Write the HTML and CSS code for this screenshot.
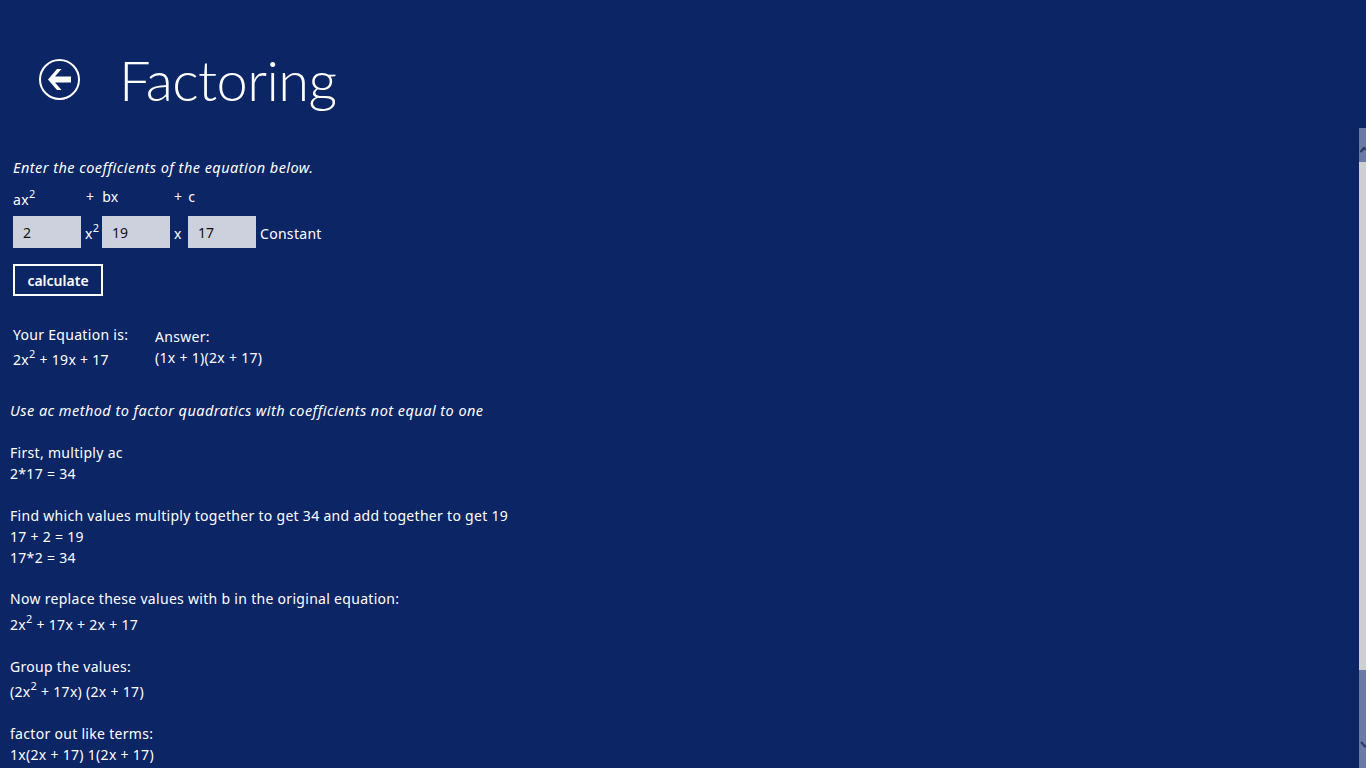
FILE: index.html
```html
<!DOCTYPE html>
<html lang="en">
<head>
<meta charset="utf-8">
<title>Factoring</title>
<link rel="stylesheet" href="styles.css">
</head>
<body>
<div class="page">
  <main class="content">
    <header class="header">
      <svg class="back" width="42" height="42" viewBox="0 0 42 42" aria-hidden="true">
        <circle cx="21.500" cy="20.500" r="19.500" fill="none" stroke="#fff" stroke-width="2"/>
        <path d="M10 20.500 L19 10 L23.500 10 L17 17.500 L33 17.500 L33 23.500 L17 23.500 L23.500 31 L19 31 Z" fill="#fff"/>
      </svg>
      <h1 class="title">Factoring</h1>
    </header>
    <section class="form">
      <p class="em intro">Enter the coefficients of the equation below.</p>
      <div class="labels">
        <span class="lab-a">ax<sup>2</sup></span>
        <span class="lab-b">+&nbsp; bx</span>
        <span class="lab-c">+ c</span>
      </div>
      <div class="inputs">
        <input class="box" type="text" value="2">
        <span class="unit">x<sup>2</sup></span>
        <input class="box" type="text" value="19">
        <span class="unit unit-x">x</span>
        <input class="box" type="text" value="17">
        <span class="constant">Constant</span>
      </div>
      <button class="calc" type="button">calculate</button>
      <div class="results">
        <div class="eq">
          <div class="eq-head">Your Equation is:</div>
          <div class="eq-val">2x<sup>2</sup> + 19x + 17</div>
        </div>
        <div class="ans">
          <div class="ans-head">Answer:</div>
          <div>(1x + 1)(2x + 17)</div>
        </div>
      </div>
    </section>
    <section class="steps">
      <p class="em step-intro">Use ac method to factor quadratics with coefficients not equal to one</p>
      <div class="group">
        <div>First, multiply ac</div>
        <div>2*17 = 34</div>
      </div>
      <div class="group tight">
        <div>Find which values multiply together to get 34 and add together to get 19</div>
        <div>17 + 2 = 19</div>
        <div>17*2 = 34</div>
      </div>
      <div class="group tight">
        <div>Now replace these values with b in the original equation:</div>
        <div class="supline low">2x<sup>2</sup> + 17x + 2x + 17</div>
      </div>
      <div class="group tight">
        <div>Group the values:</div>
        <div class="supline">(2x<sup>2</sup> + 17x) (2x + 17)</div>
      </div>
      <div class="group">
        <div>factor out like terms:</div>
        <div>1x(2x + 17) 1(2x + 17)</div>
      </div>
    </section>
  </main>
  <aside class="scrollbar" aria-hidden="true">
    <div class="track track-top">
      <svg width="7" height="8" viewBox="0 0 7 8"><path d="M1.500 7 L5 3 L7 5" fill="none" stroke="#2d3a5f" stroke-width="2"/></svg>
    </div>
    <div class="thumb"></div>
    <div class="track track-bottom">
      <svg width="7" height="8" viewBox="0 0 7 8"><path d="M2 1 L6 5.500 L7 4.500" fill="none" stroke="#2d3a5f" stroke-width="2"/></svg>
    </div>
  </aside>
</div>
</body>
</html>
```
FILE: styles.css
```css
* { box-sizing: border-box; }
html, body { margin: 0; height: 768px; overflow: hidden; }
body {
  background: #0b2565;
  color: #fff;
  font-family: "Noto Sans", "Open Sans", sans-serif;
  font-size: 14px;
  letter-spacing: 0.3px;
  line-height: 21px;
}
.page { display: flex; height: 768px; overflow: hidden; }
.content { flex: 1; min-width: 0; padding-left: 10px; height: 768px; overflow: hidden; }
.header { display: flex; align-items: flex-start; height: 153px; padding: 38px 0 0 28px; }
.back { flex: none; margin-top: 21px; }
.title {
  margin: 0 0 0 39px;
  font-family: "Lato", sans-serif;
  font-weight: 300;
  font-size: 56px;
  letter-spacing: -0.6px;
  line-height: 84px;
}
sup { font-size: 11px; line-height: 0; vertical-align: 7px; }
p { margin: 0; }
.em { font-style: italic; font-size: 14.500px; letter-spacing: 0.45px; }
.form { padding-left: 3px; }
.intro { height: 31px; padding-top: 4px; }
.labels { display: flex; height: 32px; align-items: center; padding-bottom: 7px; }
.lab-a { width: 73px; padding-top: 6px; }
.lab-b { width: 88px; }
.lab-c { word-spacing: 2px; }
.inputs { display: flex; align-items: center; height: 32px; }
.box {
  width: 68px;
  height: 32px;
  border: 0;
  padding: 0 10px;
  background: #cdd1de;
  color: #111;
  font: inherit;
  letter-spacing: 0;
  border-radius: 0;
}
.unit { width: 21px; padding-left: 4px; padding-top: 3px; }
.unit-x { width: 18px; padding-left: 4px; }
.constant { margin-left: 4px; padding-top: 3px; }
.calc {
  display: block;
  width: 90px;
  height: 32px;
  margin-top: 16px;
  border: 2px solid #fff;
  background: transparent;
  color: #fff;
  font: 600 14px/26px "Noto Sans", sans-serif;
  padding: 2px 0 0;
}
.results { display: flex; margin-top: 28px; }
.eq { width: 142px; }
.eq-head { height: 25px; }
.ans { padding-top: 2px; }
.steps { margin-top: 30px; }
.step-intro { margin-bottom: 21px; }
.group { margin-bottom: 21px; }
.tight { margin-bottom: 20px; }
.supline { line-height: 26px; height: 26px; padding-top: 2px; }
.low { height: 27px; padding-top: 3px; }
.scrollbar { flex: none; width: 7px; margin-top: 128px; display: flex; flex-direction: column; height: 640px; }
.track { background: #6a7aa2; overflow: hidden; }
.track-top { height: 34px; padding-top: 17px; }
.thumb { height: 508px; background: #cdcfd2; }
.track-bottom { height: 98px; padding-top: 71px; }
.track svg { display: block; }
```
